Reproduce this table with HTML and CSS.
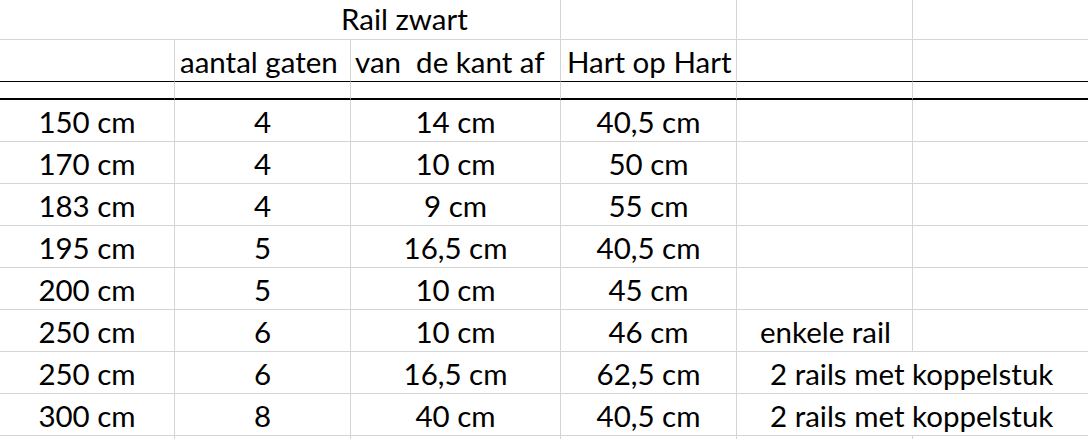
FILE: index.html
```html
<!DOCTYPE html>
<html lang="nl">
<head>
<meta charset="utf-8">
<title>Rail zwart</title>
<link rel="stylesheet" href="styles.css">
</head>
<body>
<div class="sheet">
  <div class="c span3 title">Rail zwart</div>
  <div class="c"></div>
  <div class="c"></div>
  <div class="c nr"></div>

  <div class="c hd"></div>
  <div class="c hd hb">aantal gaten</div>
  <div class="c hd hc">van  de kant af</div>
  <div class="c hd hdd">Hart op Hart</div>
  <div class="c hd"></div>
  <div class="c hd nr"></div>

  <div class="c sep"></div>
  <div class="c sep"></div>
  <div class="c sep"></div>
  <div class="c sep"></div>
  <div class="c sep"></div>
  <div class="c sep nr"></div>

  <div class="c">150 cm</div><div class="c">4</div><div class="c">14 cm</div><div class="c">40,5 cm</div><div class="c"></div><div class="c nr"></div>
  <div class="c">170 cm</div><div class="c">4</div><div class="c">10 cm</div><div class="c">50 cm</div><div class="c"></div><div class="c nr"></div>
  <div class="c">183 cm</div><div class="c">4</div><div class="c">9 cm</div><div class="c">55 cm</div><div class="c"></div><div class="c nr"></div>
  <div class="c">195 cm</div><div class="c">5</div><div class="c">16,5 cm</div><div class="c">40,5 cm</div><div class="c"></div><div class="c nr"></div>
  <div class="c">200 cm</div><div class="c">5</div><div class="c">10 cm</div><div class="c">45 cm</div><div class="c"></div><div class="c nr"></div>
  <div class="c">250 cm</div><div class="c">6</div><div class="c">10 cm</div><div class="c">46 cm</div><div class="c note">enkele rail</div><div class="c nr"></div>
  <div class="c">250 cm</div><div class="c">6</div><div class="c">16,5 cm</div><div class="c">62,5 cm</div><div class="c note2 span2 nr">2 rails met koppelstuk</div>
  <div class="c">300 cm</div><div class="c">8</div><div class="c">40 cm</div><div class="c">40,5 cm</div><div class="c note2 span2 nr">2 rails met koppelstuk</div>
  <div class="c last"></div><div class="c last"></div><div class="c last"></div><div class="c last"></div><div class="c last"></div><div class="c last nr"></div>
</div>
</body>
</html>
```
FILE: styles.css
```css
html, body {
  margin: 0;
  padding: 0;
  background: #ffffff;
  overflow: hidden;
}

.sheet {
  width: 1088px;
  height: 439px;
  overflow: hidden;
  display: grid;
  grid-template-columns: 175px 176px 210px 176px 176px 175px;
  grid-template-rows: 40px 42px 18px repeat(8, 42px) 3px;
  font-family: Lato, "Open Sans", sans-serif;
  font-size: 29.5px;
  color: #000000;
}

.c {
  box-sizing: border-box;
  border-right: 1px solid #d4d4d4;
  border-bottom: 1px solid #d4d4d4;
  display: flex;
  align-items: flex-end;
  justify-content: center;
  padding-bottom: 5px;
  line-height: 29.5px;
  white-space: pre;
  overflow: visible;
}

.nr {
  border-right: none;
}

.last {
  border-bottom: none;
  padding-bottom: 0;
}

.span3 {
  grid-column: span 3;
}

.span2 {
  grid-column: span 2;
}

.title {
  justify-content: flex-start;
  padding-left: 341px;
  padding-bottom: 6px;
}

.hd {
  border-bottom: 1px solid #000000;
}

.hb {
  justify-content: flex-start;
  padding-left: 5px;
}

.hc {
  justify-content: flex-start;
  padding-left: 4px;
}

.hdd {
  justify-content: flex-start;
  padding-left: 6px;
}

.sep {
  border-bottom: 2px solid #000000;
}

.note {
  justify-content: flex-start;
  padding-left: 23px;
}

.note2 {
  justify-content: flex-start;
  padding-left: 33px;
}
```
